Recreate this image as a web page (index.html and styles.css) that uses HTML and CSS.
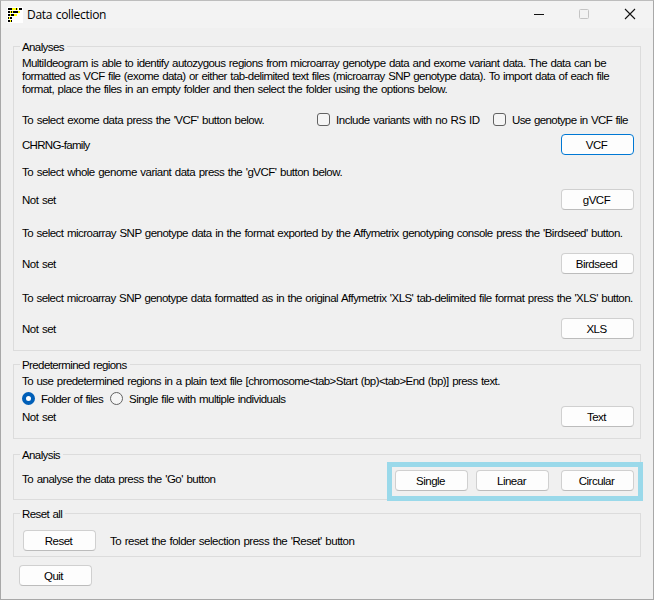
FILE: index.html
```html
<!DOCTYPE html>
<html lang="en">
<head>
<meta charset="utf-8">
<title>Data collection</title>
<link rel="stylesheet" href="styles.css">
</head>
<body>
<main class="window">
  <header class="titlebar">
    <svg class="app-icon" width="16" height="16" viewBox="0 0 16 16" shape-rendering="crispEdges">
      <path fill="#fff" d="M0 0h16v16H0z"/>
      <path fill="#000" d="M1 1h4v2H1zM9 1h1v2H9zM12 1h3v2h-3zM1 4h2v2H1zM4 4h1v2H4zM6 4h5v2H6zM1 7h2v2H1zM4 7h3v2H4zM1 10h1v2H1zM3 10h2v2H3zM1 13h2v2H1zM4 13h1v2H4z"/>
      <path fill="#ff0" d="M5 1h4v2H5zM10 1h1v2h-1zM3 4h1v2H3zM5 4h1v2H5zM11 4h2v2h-2zM3 7h1v2H3zM7 7h3v2H7zM2 10h1v2H2zM3 13h1v2H3z"/>
    </svg>
    <h1 class="title">Data collection</h1>
    <svg class="controls" width="104" height="13" viewBox="0 0 104 13" fill="none">
      <path stroke="#111" d="M0 6.500h10"/>
      <rect x="45.500" y="1.500" width="9" height="9" rx="1" stroke="#c4c4c4"/>
      <path stroke="#111" stroke-width="1.100" d="M91 1l10 10M101 1l-10 10"/>
    </svg>
  </header>

  <section class="group analyses">
    <h2 class="legend">Analyses</h2>
    <p class="intro"><span class="l1">MultiIdeogram is able to identify autozygous regions from microarray genotype data and exome variant data. The data can be</span><br><span class="l2">formatted as VCF file (exome data) or either tab-delimited text files (microarray SNP genotype data). To import data of each file</span><br><span class="l3">format, place the files in an empty folder and then select the folder using the options below.</span></p>
    <div class="row exome">
      <span class="t-exome">To select exome data press the 'VCF' button below.</span>
      <label class="check c1"><i class="box"></i><span class="t-rs">Include variants with no RS ID</span></label>
      <label class="check c2"><i class="box"></i><span class="t-use">Use genotype in VCF file</span></label>
    </div>
    <div class="row vcf"><span class="t-family">CHRNG-family</span><button class="btn focus">VCF</button></div>
    <div class="row h-gvcf"><span class="t-gvcf">To select whole genome variant data press the 'gVCF' button below.</span></div>
    <div class="row gvcf"><span>Not set</span><button class="btn">gVCF</button></div>
    <div class="row h-bird"><span class="t-bird">To select microarray SNP genotype data in the format exported by the Affymetrix genotyping console press the 'Birdseed' button.</span></div>
    <div class="row bird"><span>Not set</span><button class="btn">Birdseed</button></div>
    <div class="row h-xls"><span class="t-xls">To select microarray SNP genotype data formatted as in the original Affymetrix 'XLS' tab-delimited file format press the 'XLS' button.</span></div>
    <div class="row xls"><span>Not set</span><button class="btn">XLS</button></div>
  </section>

  <section class="group regions">
    <h2 class="legend">Predetermined regions</h2>
    <div class="row pre"><span class="t-pre">To use predetermined regions in a plain text file [chromosome&lt;tab&gt;Start (bp)&lt;tab&gt;End (bp)] press text.</span></div>
    <div class="row radios">
      <label class="check"><i class="radio on"></i><span class="t-folder">Folder of files</span></label>
      <label class="check r2"><i class="radio"></i><span class="t-single">Single file with multiple individuals</span></label>
    </div>
    <div class="row text"><span>Not set</span><button class="btn">Text</button></div>
  </section>

  <section class="group analysis">
    <h2 class="legend">Analysis</h2>
    <div class="row go">
      <span class="t-go">To analyse the data press the 'Go' button</span>
      <div class="highlight"><button class="btn">Single</button><button class="btn">Linear</button><button class="btn last">Circular</button></div>
    </div>
  </section>

  <section class="group reset">
    <h2 class="legend">Reset all</h2>
    <div class="row reset-row"><button class="btn">Reset</button><span class="t-reset">To reset the folder selection press the 'Reset' button</span></div>
  </section>
  <button class="btn quit">Quit</button>
</main>
</body>
</html>
```
FILE: styles.css
```css
* { box-sizing: border-box; }
body {
  margin: 0;
  width: 654px;
  height: 600px;
  overflow: hidden;
  background: #f0f0f0;
  color: #000;
  font: 11.5px/13px "Liberation Sans", Arial, sans-serif;
  letter-spacing: -0.5px;
  word-spacing: 0.8px;
}
.window {
  height: 600px;
  border: 1px solid #a8a8a8;
  border-top-color: #bdbdbd;
}
.titlebar {
  display: flex;
  align-items: center;
  height: 27px;
  padding: 0 15px 0 6px;
  background: #f3f3f3;
}
.title {
  flex: 1;
  margin: 0 0 0 4px;
  padding-top: 1px;
  font: 12px/16px "Open Sans", sans-serif;
  letter-spacing: -0.3px;
}
.group {
  margin: 0 12px;
  width: 628px;
  border: 1px solid #dcdcdc;
}
.legend {
  width: max-content;
  height: 13px;
  margin: -6px 0 -1px 6px;
  padding: 0 3px 0 2px;
  background: #f0f0f0;
  font: inherit;
  letter-spacing: -0.6px;
}
.analyses { height: 305px; margin-top: 18px; }
.regions { height: 75px; margin-top: 13px; }
.analysis { height: 46px; margin-top: 15px; }
.reset { height: 44px; margin-top: 13px; }
.intro { margin: 4px 0 0 8px; white-space: nowrap; }
.row {
  display: flex;
  align-items: center;
  justify-content: space-between;
  height: 21px;
  padding: 0 6px 0 8px;
  white-space: nowrap;
}
.row span { padding-top: 2px; }
.l1 { letter-spacing: -0.553px; }
.l2 { letter-spacing: -0.57px; }
.l3 { letter-spacing: -0.53px; }
.t-rs { letter-spacing: -0.48px; }
.t-use { letter-spacing: -0.61px; }
.t-family { letter-spacing: -0.7px; }
.t-bird { letter-spacing: -0.525px; }
.t-xls { letter-spacing: -0.541px; }
.t-folder { letter-spacing: -0.57px; }
.t-single { letter-spacing: -0.54px; }
.t-reset { letter-spacing: -0.48px; }
.btn {
  width: 73px;
  height: 21px;
  padding: 2px 2px 0 0;
  border: 1px solid #d0d0d0;
  border-bottom-color: #bcbcbc;
  border-radius: 4px;
  background: #fdfdfd;
  color: #000;
  font: inherit;
  letter-spacing: inherit;
}
.btn.focus { border-color: #0078d4; }
.exome { margin-top: 13px; justify-content: flex-start; }
.t-exome { width: 295px; }
.check { display: flex; align-items: center; }
.c1 { width: 176px; }
.box {
  width: 13px;
  height: 13px;
  margin-right: 6px;
  border: 1px solid #626262;
  border-radius: 3px;
  background: #f5f5f5;
}
.radio {
  width: 13px;
  height: 13px;
  margin-right: 6px;
  border: 1px solid #626262;
  border-radius: 50%;
  background: #f5f5f5;
}
.radio.on { border: 4px solid #005fb8; background: #fff; }
.vcf { margin-top: 4px; }
.h-gvcf { margin-top: 6px; }
.gvcf { margin-top: 7px; }
.h-bird { margin-top: 12px; }
.bird { margin-top: 10px; }
.h-xls { margin-top: 13px; }
.xls { margin-top: 10px; }
.pre { height: 20px; }
.row .t-pre { padding-top: 0; letter-spacing: -0.556px; }
.radios { height: 15px; justify-content: flex-start; }
.r2 { margin-left: 7px; }
.text { height: 21px; }
.go { height: 39px; margin-top: 1px; padding-right: 0; }
.row .t-go { padding: 0 0 4px; }
.highlight {
  display: flex;
  gap: 8px;
  width: 256px;
  height: 39px;
  margin-right: -3px;
  padding: 3px;
  border: 5px solid #9ad9ea;
}
.highlight .last { margin-left: 4px; }
.reset-row { height: 21px; margin-top: 10px; padding-left: 9px; justify-content: flex-start; gap: 14px; }
.quit { display: block; margin: 8px 0 0 18px; padding-right: 4px; }
```
